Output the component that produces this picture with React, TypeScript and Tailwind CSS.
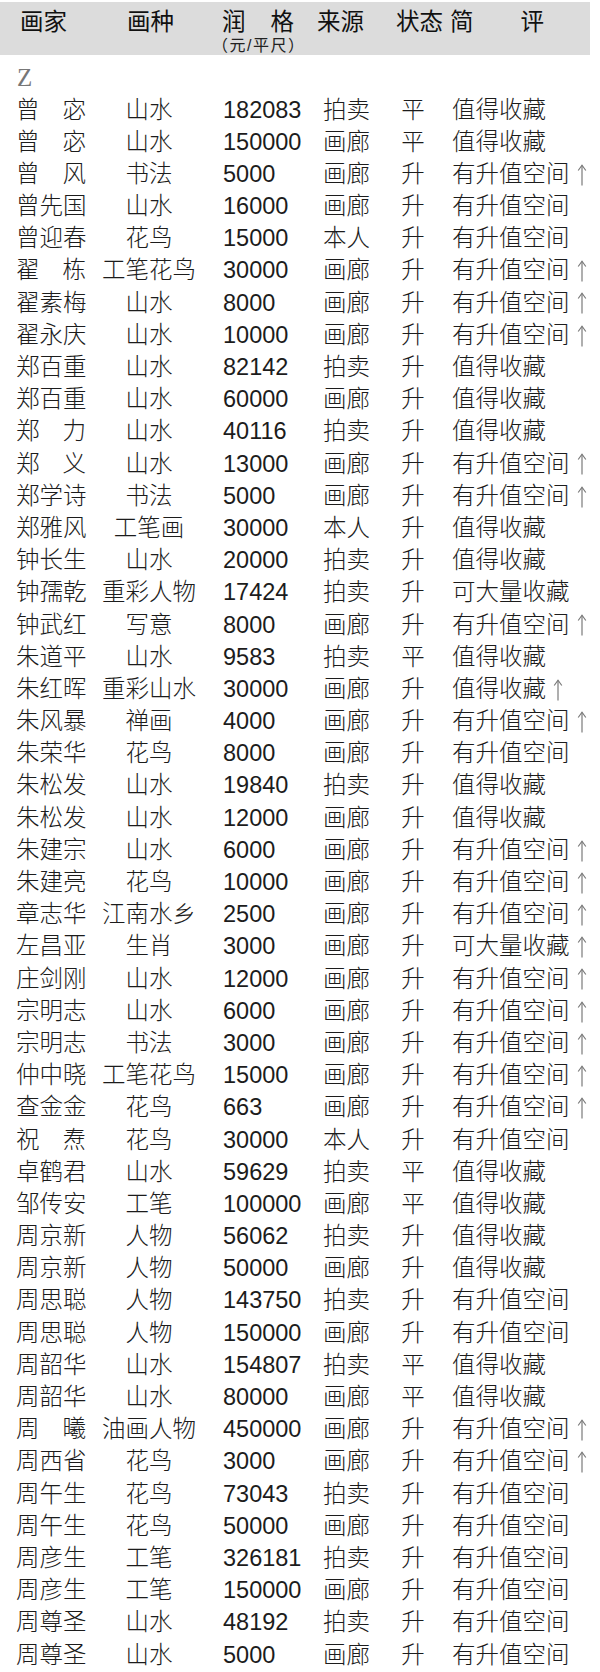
import React from "react";

type Row = [string, string, string, string, string, string, boolean?];

const rows: Row[] = [
  ["曾宓", "山水", "182083", "拍卖", "平", "值得收藏"],
  ["曾宓", "山水", "150000", "画廊", "平", "值得收藏"],
  ["曾风", "书法", "5000", "画廊", "升", "有升值空间", true],
  ["曾先国", "山水", "16000", "画廊", "升", "有升值空间"],
  ["曾迎春", "花鸟", "15000", "本人", "升", "有升值空间"],
  ["翟栋", "工笔花鸟", "30000", "画廊", "升", "有升值空间", true],
  ["翟素梅", "山水", "8000", "画廊", "升", "有升值空间", true],
  ["翟永庆", "山水", "10000", "画廊", "升", "有升值空间", true],
  ["郑百重", "山水", "82142", "拍卖", "升", "值得收藏"],
  ["郑百重", "山水", "60000", "画廊", "升", "值得收藏"],
  ["郑力", "山水", "40116", "拍卖", "升", "值得收藏"],
  ["郑义", "山水", "13000", "画廊", "升", "有升值空间", true],
  ["郑学诗", "书法", "5000", "画廊", "升", "有升值空间", true],
  ["郑雅风", "工笔画", "30000", "本人", "升", "值得收藏"],
  ["钟长生", "山水", "20000", "拍卖", "升", "值得收藏"],
  ["钟孺乾", "重彩人物", "17424", "拍卖", "升", "可大量收藏"],
  ["钟武红", "写意", "8000", "画廊", "升", "有升值空间", true],
  ["朱道平", "山水", "9583", "拍卖", "平", "值得收藏"],
  ["朱红晖", "重彩山水", "30000", "画廊", "升", "值得收藏", true],
  ["朱风暴", "禅画", "4000", "画廊", "升", "有升值空间", true],
  ["朱荣华", "花鸟", "8000", "画廊", "升", "有升值空间"],
  ["朱松发", "山水", "19840", "拍卖", "升", "值得收藏"],
  ["朱松发", "山水", "12000", "画廊", "升", "值得收藏"],
  ["朱建宗", "山水", "6000", "画廊", "升", "有升值空间", true],
  ["朱建亮", "花鸟", "10000", "画廊", "升", "有升值空间", true],
  ["章志华", "江南水乡", "2500", "画廊", "升", "有升值空间", true],
  ["左昌亚", "生肖", "3000", "画廊", "升", "可大量收藏", true],
  ["庄剑刚", "山水", "12000", "画廊", "升", "有升值空间", true],
  ["宗明志", "山水", "6000", "画廊", "升", "有升值空间", true],
  ["宗明志", "书法", "3000", "画廊", "升", "有升值空间", true],
  ["仲中晓", "工笔花鸟", "15000", "画廊", "升", "有升值空间", true],
  ["查金金", "花鸟", "663", "画廊", "升", "有升值空间", true],
  ["祝焘", "花鸟", "30000", "本人", "升", "有升值空间"],
  ["卓鹤君", "山水", "59629", "拍卖", "平", "值得收藏"],
  ["邹传安", "工笔", "100000", "画廊", "平", "值得收藏"],
  ["周京新", "人物", "56062", "拍卖", "升", "值得收藏"],
  ["周京新", "人物", "50000", "画廊", "升", "值得收藏"],
  ["周思聪", "人物", "143750", "拍卖", "升", "有升值空间"],
  ["周思聪", "人物", "150000", "画廊", "升", "有升值空间"],
  ["周韶华", "山水", "154807", "拍卖", "平", "值得收藏"],
  ["周韶华", "山水", "80000", "画廊", "平", "值得收藏"],
  ["周曦", "油画人物", "450000", "画廊", "升", "有升值空间", true],
  ["周西省", "花鸟", "3000", "画廊", "升", "有升值空间", true],
  ["周午生", "花鸟", "73043", "拍卖", "升", "有升值空间"],
  ["周午生", "花鸟", "50000", "画廊", "升", "有升值空间"],
  ["周彦生", "工笔", "326181", "拍卖", "升", "有升值空间"],
  ["周彦生", "工笔", "150000", "画廊", "升", "有升值空间"],
  ["周尊圣", "山水", "48192", "拍卖", "升", "有升值空间"],
  ["周尊圣", "山水", "5000", "画廊", "升", "有升值空间"],
];

function Arrow() {
  return (
    <svg width="10" height="22" viewBox="0 0 10 22" className="ml-[7px] shrink-0">
      <path d="M5 1.5 V21.5" stroke="#7a7a7a" strokeWidth="1.2" fill="none" />
      <path d="M1.2 6.5 L5 1.2 L8.8 6.5" stroke="#7a7a7a" strokeWidth="1.2" fill="none" />
    </svg>
  );
}

function Name({ n }: { n: string }) {
  const chars = Array.from(n);
  if (chars.length === 2) {
    return (
      <div className="flex w-[70px] justify-between">
        <span>{chars[0]}</span>
        <span>{chars[1]}</span>
      </div>
    );
  }
  return <span className="whitespace-nowrap">{n}</span>;
}

export default function App() {
  return (
    <div
      className="w-[600px] h-[1672px] overflow-hidden bg-white text-[#1c1c1c] font-light"
      style={{ fontFamily: '"Liberation Sans", "Noto Sans CJK SC", sans-serif' }}
    >
      {/* header */}
      <div className="mt-[2px] h-[53px] w-[590px] bg-[#dcdcdc] flex items-start pt-[7px] pl-[20px] text-[23.5px] leading-[26px] text-[#111] font-normal">
        <div className="w-[107px]">画家</div>
        <div className="w-[95px]">画种</div>
        <div className="w-[95px] flex flex-col">
          <div className="flex w-[72px] justify-between">
            <span>润</span>
            <span>格</span>
          </div>
          <div className="mt-[2px] ml-[-10px] text-[16px] leading-[18px] tracking-[1.5px] whitespace-nowrap font-normal text-[#222]">（元/平尺）</div>
        </div>
        <div className="w-[79px]">来源</div>
        <div className="w-[54px]">状态</div>
        <div className="flex w-[94px] justify-between">
          <span>简</span>
          <span>评</span>
        </div>
      </div>

      <div
        className="mt-[7px] h-[32.2px] flex items-center pl-[17px] text-[25px] text-[#777] font-normal"
        style={{ fontFamily: '"Liberation Serif", serif' }}
      >
        Z
      </div>

      {rows.map((r, i) => (
        <div key={i} className="flex h-[32.2px] items-center text-[23.5px] leading-none whitespace-nowrap">
          <div className="w-[100px] pl-[16px]">
            <Name n={r[0]} />
          </div>
          <div className="w-[98px] text-center">{r[1]}</div>
          <div className="w-[125px] pl-[25px]">{r[2]}</div>
          <div className="w-[78px]">{r[3]}</div>
          <div className="w-[24px] text-center">{r[4]}</div>
          <div className="pl-[27px] flex items-center">
            <span>{r[5]}</span>
            {r[6] ? <Arrow /> : null}
          </div>
        </div>
      ))}
    </div>
  );
}
